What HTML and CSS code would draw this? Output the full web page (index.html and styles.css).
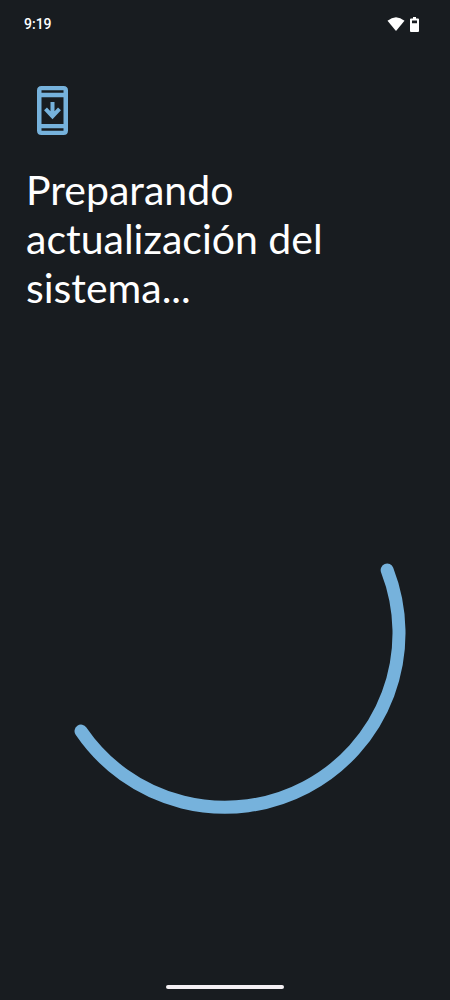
FILE: index.html
```html
<!DOCTYPE html>
<html lang="es">
<head>
<meta charset="utf-8">
<meta name="viewport" content="width=device-width, initial-scale=1">
<title>Actualización del sistema</title>
<link rel="stylesheet" href="styles.css">
</head>
<body class="screen">
<header class="status">
<time class="clock">9:19</time>
<div class="status-icons">
<svg width="18" height="14" viewBox="0 0 18 14" aria-label="Wi-Fi"><path fill="#fff" d="M9 14 .5 3.800Q9-3.200 17.500 3.800Z"/></svg>
<svg width="9" height="15" viewBox="0 0 9 15" aria-label="Batería"><path fill="#fff" fill-rule="evenodd" d="M3 0h3v1.500h2q1 0 1 1V14q0 1-1 1H1q-1 0-1-1V2.500q0-1 1-1h2ZM2 3.500v2.700h5V3.500Z"/></svg>
</div>
</header>
<main class="content">
<svg class="update-icon" width="31" height="49" viewBox="0 0 31 49" aria-hidden="true"><path fill="#76b2dc" fill-rule="evenodd" d="M4.500 0H26.500Q31 0 31 4.500V44.500Q31 49 26.500 49H4.500Q0 49 0 44.500V4.500Q0 0 4.500 0ZM4.500 4.300V6.800H26.500V4.300ZM4.500 11.200V38H26.500V11.200ZM4.500 42.300V44.800H26.500V42.300Z"/><path d="M15.500 16V30M8.500 22.800l7 7.500 7-7.500" fill="none" stroke="#76b2dc" stroke-width="4"/></svg>
<h1 class="title">Preparando actualización del sistema...</h1>
<div class="progress" role="progressbar" aria-label="Preparando actualización">
<svg class="arc" viewBox="0 0 362 362"><path d="M343 118A174 174 0 0 1 37 279" fill="none" stroke="#76b2dc" stroke-width="13" stroke-linecap="round"/></svg>
</div>
</main>
<footer class="nav"><div class="handle"></div></footer>
</body>
</html>
```
FILE: styles.css
```css
.screen{margin:0;min-height:100vh;display:flex;flex-direction:column;background:#181c20;color:#fff;font-family:Lato,sans-serif}
.status{display:flex;justify-content:space-between;align-items:center;height:48px;padding:0 31px 0 24px}
.clock{font:500 14px/20px Roboto,sans-serif}
.status-icons{display:flex;align-items:center;gap:5px}
.content{flex:1;display:flex;flex-direction:column;padding:38px 26px 0}
.update-icon{margin-left:11px}
.title{margin:30px 0 0;max-width:320px;font-size:41px;line-height:49px;font-weight:400}
.progress{margin-top:140px;display:flex;justify-content:center}
.arc{width:91%;display:block}
.nav{display:flex;justify-content:center;padding-bottom:11px}
.handle{width:118px;height:4px;border-radius:2px;background:#f4f0f4}
```
